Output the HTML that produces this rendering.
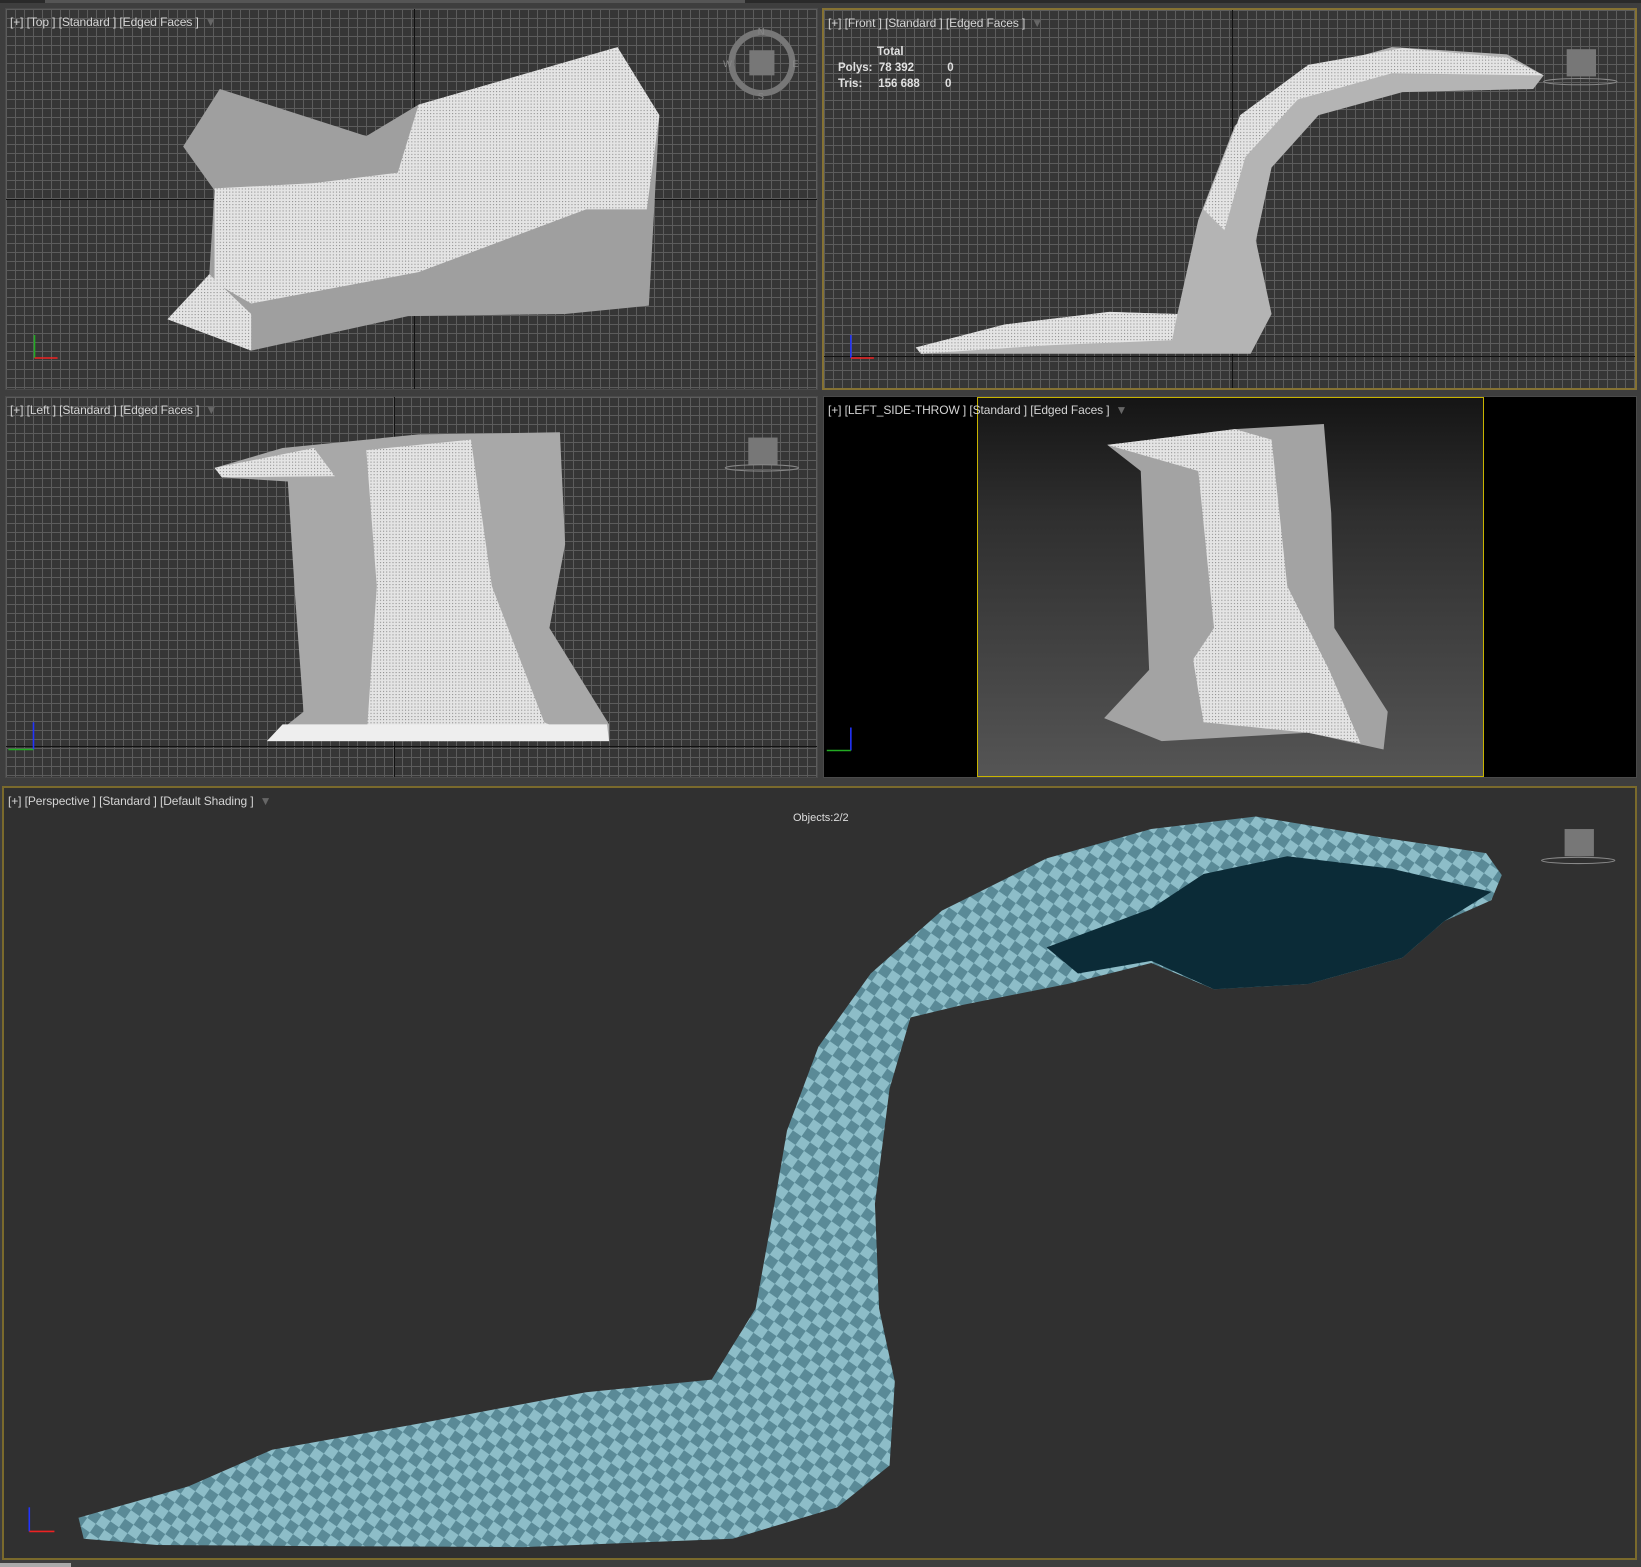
<!DOCTYPE html>
<html><head><meta charset="utf-8"><style>
html,body{margin:0;padding:0}
body{width:1641px;height:1567px;background:#3e3e3e;position:relative;overflow:hidden;font-family:"Liberation Sans",sans-serif}
.vp{position:absolute;box-sizing:border-box;overflow:hidden}
.grid{background-color:#363636;background-image:linear-gradient(#5c5c5c 1px,transparent 1px),linear-gradient(90deg,#5c5c5c 1px,transparent 1px);background-size:9px 9px;border:1px solid #4a4a4a}
.lbl{position:absolute;left:4px;top:6px;font-size:12px;color:#d4d4d4;white-space:nowrap;letter-spacing:-0.1px}
.lbl b{font-weight:normal;color:#666;margin-left:6px}
#top{left:5px;top:8px;width:813px;height:382px}
#front{left:822px;top:8px;width:815px;height:382px;border:2px solid #857233}
#left{left:5px;top:396px;width:813px;height:382px}
#cam{left:823px;top:396px;width:814px;height:382px;background:#000;border:1px solid #4a4a4a}
#camin{position:absolute;left:153px;top:0;width:507px;height:380px;border:1px solid #c8b400;box-sizing:border-box;background:linear-gradient(#151515,#2e2e2e 30%,#444 70%,#555)}
#persp{left:2px;top:786px;width:1635px;height:774px;background:#303030;border:2px solid #7a6a2c}
.stats{position:absolute;left:14px;top:34px;font-size:11.5px;font-weight:bold;color:#e0e0e0;line-height:16px}
svg{position:absolute;left:0;top:0}
</style></head><body>
<div style="position:absolute;left:0;top:0;width:1641px;height:3px;background:#2a2a2a"></div>
<div style="position:absolute;left:45px;top:0;width:700px;height:3px;background:#555"></div>

<div class="vp grid" id="top"><div style="position:absolute;left:408px;top:0;width:1px;height:100%;background:#111"></div><div style="position:absolute;top:190px;left:0;height:1px;width:100%;background:#111"></div><div class="lbl">[+] [Top ] [Standard ] [Edged Faces ]<b>▼</b></div></div>
<div class="vp grid" id="front"><div style="position:absolute;left:408px;top:0;width:1px;height:100%;background:#111"></div><div style="position:absolute;top:346px;left:0;height:1px;width:100%;background:#111"></div><div class="lbl">[+] [Front ] [Standard ] [Edged Faces ]<b>▼</b></div>
<div class="stats"><div style="padding-left:39px">Total</div><div>Polys:&nbsp; 78 392 <span style="padding-left:30px">0</span></div><div>Tris:&nbsp;&nbsp;&nbsp;&nbsp; 156 688 <span style="padding-left:22px">0</span></div></div></div>
<div class="vp grid" id="left"><div style="position:absolute;left:388px;top:0;width:1px;height:100%;background:#111"></div><div style="position:absolute;top:349px;left:0;height:1px;width:100%;background:#111"></div><div class="lbl">[+] [Left ] [Standard ] [Edged Faces ]<b>▼</b></div></div>
<div class="vp" id="cam"><div id="camin"></div><div class="lbl">[+] [LEFT_SIDE-THROW ] [Standard ] [Edged Faces ]<b>▼</b></div></div>
<div class="vp" id="persp"><div class="lbl">[+] [Perspective ] [Standard ] [Default Shading ]<b>▼</b></div><div style="position:absolute;left:789px;top:24px;font-size:11px;color:#ddd">Objects:2/2</div></div>
<div style="position:absolute;left:0;top:1563px;width:71px;height:4px;background:#aaa"></div>

<svg width="1641" height="1567" viewBox="0 0 1568 1497" preserveAspectRatio="none">
<defs>
<pattern id="chk" width="20" height="20" patternUnits="userSpaceOnUse" patternTransform="rotate(35)">
<rect width="20" height="20" fill="#5a8a97"/><rect width="10" height="10" fill="#8dbdc8"/><rect x="10" y="10" width="10" height="10" fill="#8dbdc8"/></pattern>
<pattern id="wf" width="3" height="3" patternUnits="userSpaceOnUse"><rect width="3" height="3" fill="#e4e4e4"/><rect width="1" height="1" fill="#8a8a8a"/></pattern>
</defs>
<path d="M160,305 L200,262 L205,182 L175,140 L210,85 L350,130 L400,100 L590,45 L630,110 L620,292 L540,300 L390,302 L240,335 Z" fill="#9f9f9f"/>
<path d="M205,180 L300,175 L380,165 L400,100 L590,45 L630,110 L618,200 L560,200 L400,260 L240,290 L205,270 Z" fill="url(#wf)"/>
<path d="M160,305 L200,262 L240,300 L240,335 Z" fill="url(#wf)"/>
<circle cx="728" cy="60" r="29" fill="none" stroke="#777" stroke-width="6"/><rect x="716" y="48" width="24" height="24" fill="#777"/>
<text x="724" y="33" font-size="9" fill="#888" font-family="Liberation Sans">N</text><text x="724" y="95" font-size="9" fill="#888" font-family="Liberation Sans">S</text><text x="691" y="64" font-size="9" fill="#888" font-family="Liberation Sans">W</text><text x="757" y="64" font-size="9" fill="#888" font-family="Liberation Sans">E</text>
<path d="M875,332 L960,310 L1060,298 L1125,300 L1145,210 L1180,120 L1240,70 L1330,45 L1440,52 L1475,72 L1465,85 L1340,88 L1260,110 L1215,160 L1200,230 L1215,300 L1195,338 L880,338 Z" fill="#b4b4b4"/>
<path d="M1150,200 L1185,110 L1250,62 L1340,46 L1440,55 L1475,72 L1330,70 L1240,95 L1190,150 L1170,220 Z" fill="url(#wf)"/>
<path d="M875,332 L960,310 L1060,298 L1125,300 L1120,325 L1000,330 L880,338 Z" fill="url(#wf)"/>
<rect x="1497" y="47" width="28" height="26" fill="#777"/><ellipse cx="1510" cy="78" rx="35" ry="3" fill="none" stroke="#888"/>
<path d="M205,447 L270,428 L400,415 L535,413 L540,520 L525,600 L582,692 L582,708 L255,708 L290,680 L282,570 L275,460 L212,456 Z" fill="#a8a8a8"/>
<path d="M350,430 L450,420 L470,560 L520,690 L560,708 L350,708 L360,560 Z" fill="url(#wf)"/>
<path d="M205,447 L300,428 L320,455 L212,456 Z" fill="url(#wf)"/>
<path d="M255,708 L270,692 L580,692 L582,708 Z" fill="#eee"/>
<rect x="715" y="418" width="28" height="26" fill="#777"/><ellipse cx="728" cy="447" rx="35" ry="3" fill="none" stroke="#888"/>
<path d="M1058,425 L1180,410 L1265,405 L1272,490 L1275,600 L1326,680 L1322,716 L1250,700 L1110,708 L1055,686 L1098,640 L1090,450 Z" fill="#a3a3a3"/>
<path d="M1058,425 L1180,410 L1215,420 L1230,560 L1270,640 L1300,710 L1250,700 L1150,690 L1140,630 L1160,600 L1145,450 Z" fill="url(#wf)"/>
<path d="M75,1450 L180,1420 L260,1385 L400,1360 L560,1330 L680,1318 L722,1250 L740,1150 L752,1080 L782,1000 L832,930 L900,870 L1000,820 L1100,792 L1200,780 L1320,800 L1420,815 L1435,836 L1425,860 L1380,880 L1340,915 L1250,940 L1160,945 L1100,920 L1020,940 L920,960 L870,972 L850,1040 L836,1150 L840,1250 L855,1320 L850,1400 L800,1440 L700,1470 L500,1478 L300,1477 L150,1476 L80,1470 Z" fill="url(#chk)"/>
<path d="M1000,905 L1100,868 L1150,835 L1230,818 L1330,830 L1425,852 L1380,880 L1340,915 L1250,940 L1160,945 L1100,918 L1030,930 Z" fill="#0b2b37"/>
<rect x="1495" y="792" width="28" height="26" fill="#777"/><ellipse cx="1508" cy="822" rx="35" ry="3" fill="none" stroke="#888"/>
<g stroke-width="1.5"><line x1="28" y1="1440" x2="28" y2="1463" stroke="#2233ff"/><line x1="28" y1="1463" x2="52" y2="1463" stroke="#e22"/>
<line x1="33" y1="320" x2="33" y2="342" stroke="#2a2"/><line x1="33" y1="342" x2="55" y2="342" stroke="#e22"/>
<line x1="813" y1="320" x2="813" y2="342" stroke="#23f"/><line x1="813" y1="342" x2="835" y2="342" stroke="#e22"/>
<line x1="32" y1="690" x2="32" y2="716" stroke="#23f"/><line x1="8" y1="716" x2="32" y2="716" stroke="#2a2"/>
<line x1="813" y1="695" x2="813" y2="717" stroke="#23f"/><line x1="790" y1="717" x2="813" y2="717" stroke="#2a2"/></g>
</svg>
</body></html>
